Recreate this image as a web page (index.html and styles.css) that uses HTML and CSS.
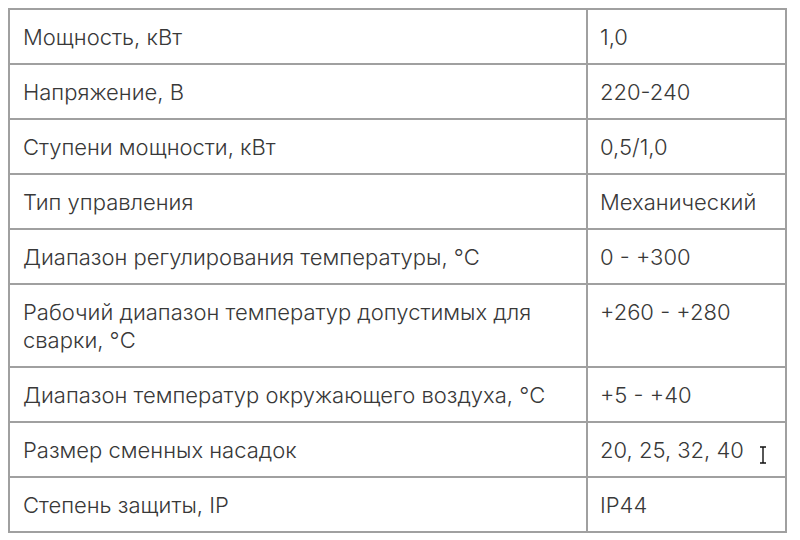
FILE: index.html
```html
<!DOCTYPE html>
<html lang="ru">
<head>
<meta charset="utf-8">
<link rel="stylesheet" href="styles.css">
</head>
<body>
<table class="specs">
  <tr><td class="name">Мощность, кВт</td><td class="val">1,0</td></tr>
  <tr><td class="name">Напряжение, В</td><td class="val">220-240</td></tr>
  <tr><td class="name">Ступени мощности, кВт</td><td class="val">0,5/1,0</td></tr>
  <tr><td class="name">Тип управления</td><td class="val">Механический</td></tr>
  <tr><td class="name">Диапазон регулирования температуры, °C</td><td class="val">0 - +300</td></tr>
  <tr><td class="name">Рабочий диапазон температур допустимых для сварки, °C</td><td class="val">+260 - +280</td></tr>
  <tr><td class="name">Диапазон температур окружающего воздуха, °C</td><td class="val">+5 - +40</td></tr>
  <tr><td class="name">Размер сменных насадок</td><td class="val cursor-cell">20, 25, 32, 40<svg class="ibeam" width="8" height="18" viewBox="0 0 8 18"><path d="M1 1h6M4 1v16M1 17h6" stroke="#111" stroke-width="1.4" fill="none"/></svg></td></tr>
  <tr><td class="name">Степень защиты, IP</td><td class="val">IP44</td></tr>
</table>
</body>
</html>
```
FILE: styles.css
```css
html, body {
  margin: 0;
  background: #fff;
}
body {
  padding: 8px;
  font-family: Inter, Roboto, "Noto Sans", sans-serif;
  color: #383838;
}
.specs {
  border-collapse: collapse;
  width: 779px;
  table-layout: fixed;
}
.specs td {
  border: 2px solid #a0a0a0;
  font-size: 22px;
  font-weight: 300;
  line-height: 28px;
  padding: 13px 13px 12px 13px;
  vertical-align: top;
}
.specs .name {
  width: 550px;
}
.specs .val {
  padding-left: 12px;
}
.cursor-cell {
  position: relative;
}
.ibeam {
  position: absolute;
  left: 171px;
  top: 23px;
}
```
